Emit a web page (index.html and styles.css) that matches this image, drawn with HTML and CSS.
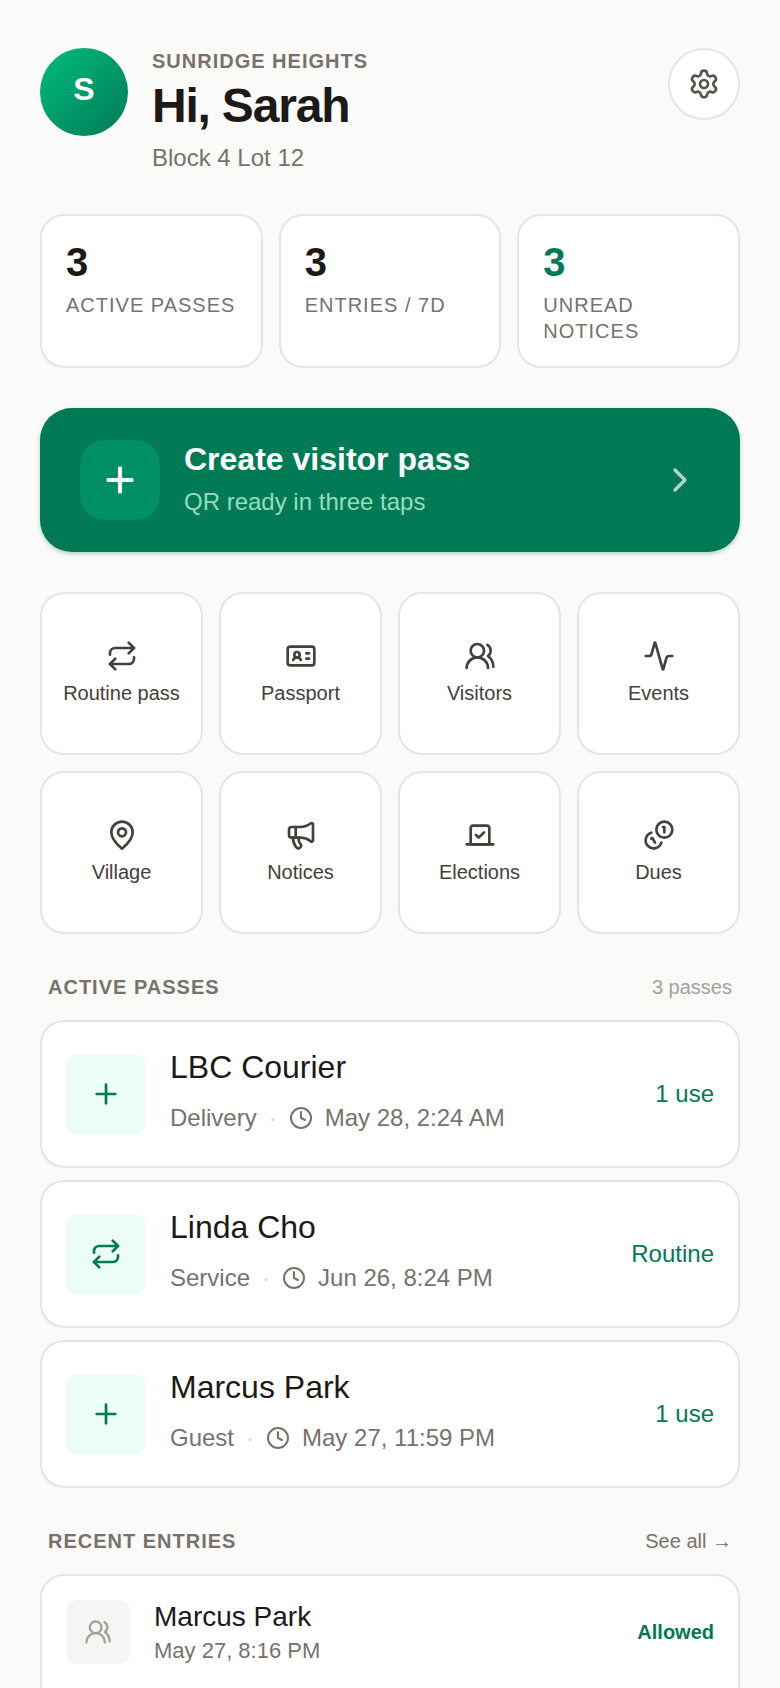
FILE: index.html
```html
<!DOCTYPE html>
<html lang="en">
<head>
<meta charset="utf-8">
<meta name="viewport" content="width=device-width, initial-scale=1">
<title>Sunridge Heights</title>
<link rel="stylesheet" href="styles.css">
</head>
<body>
<svg class="sprite" aria-hidden="true">
  <symbol id="plus" viewBox="0 0 24 24"><path d="M5 12h14M12 5v14"/></symbol>
  <symbol id="repeat" viewBox="0 0 24 24"><path d="m17 2 4 4-4 4"/><path d="M3 11v-1a4 4 0 0 1 4-4h14"/><path d="m7 22-4-4 4-4"/><path d="M21 13v1a4 4 0 0 1-4 4H3"/></symbol>
  <symbol id="users" viewBox="0 0 24 24"><path d="M18 21a8 8 0 0 0-16 0"/><circle cx="10" cy="8" r="5"/><path d="M22 20c0-3.37-2-6.5-4-8a5 5 0 0 0-.45-8.3"/></symbol>
  <symbol id="clock" viewBox="0 0 24 24"><circle cx="12" cy="12" r="10"/><path d="M12 6v6l4 2"/></symbol>
</svg>
<main class="app">
  <header class="header">
    <div class="avatar">S</div>
    <div class="identity">
      <p class="community">SUNRIDGE HEIGHTS</p>
      <h1 class="greeting">Hi, Sarah</h1>
      <p class="address">Block 4 Lot 12</p>
    </div>
    <button class="settings" type="button" aria-label="Settings">
      <svg class="icon" viewBox="0 0 24 24"><path d="M9.671 4.136a2.34 2.34 0 0 1 4.659 0 2.34 2.34 0 0 0 3.319 1.915 2.34 2.34 0 0 1 2.33 4.033 2.34 2.34 0 0 0 0 3.831 2.34 2.34 0 0 1-2.33 4.033 2.34 2.34 0 0 0-3.319 1.915 2.34 2.34 0 0 1-4.659 0 2.34 2.34 0 0 0-3.32-1.915 2.34 2.34 0 0 1-2.33-4.033 2.34 2.34 0 0 0 0-3.831A2.34 2.34 0 0 1 6.35 6.051a2.34 2.34 0 0 0 3.319-1.915"/><circle cx="12" cy="12" r="3"/></svg>
    </button>
  </header>

  <section class="stats" aria-label="Summary">
    <div class="card stat"><p class="stat-value">3</p><p class="stat-label">ACTIVE PASSES</p></div>
    <div class="card stat"><p class="stat-value">3</p><p class="stat-label">ENTRIES / 7D</p></div>
    <div class="card stat"><p class="stat-value stat-value-accent">3</p><p class="stat-label">UNREAD NOTICES</p></div>
  </section>

  <a class="create" href="#create">
    <span class="create-icon"><svg class="icon icon-large icon-heavy"><use href="#plus"/></svg></span>
    <span class="create-text">
      <span class="create-title">Create visitor pass</span>
      <span class="create-sub">QR ready in three taps</span>
    </span>
    <svg class="icon icon-large create-chevron" viewBox="0 0 24 24"><path d="m9 18 6-6-6-6"/></svg>
  </a>

  <nav class="tiles" aria-label="Shortcuts">
    <a class="card tile" href="#routine"><svg class="icon"><use href="#repeat"/></svg>Routine pass</a>
    <a class="card tile" href="#passport"><svg class="icon" viewBox="0 0 24 24"><rect x="2" y="5" width="20" height="14" rx="2"/><circle cx="9" cy="11" r="2"/><path d="M16 10h2M16 14h2M6.17 15a3 3 0 0 1 5.66 0"/></svg>Passport</a>
    <a class="card tile" href="#visitors"><svg class="icon"><use href="#users"/></svg>Visitors</a>
    <a class="card tile" href="#events"><svg class="icon" viewBox="0 0 24 24"><path d="M22 12h-2.48a2 2 0 0 0-1.93 1.46l-2.35 8.36a.25.25 0 0 1-.48 0L9.24 2.18a.25.25 0 0 0-.48 0l-2.35 8.36A2 2 0 0 1 4.49 12H2"/></svg>Events</a>
    <a class="card tile" href="#village"><svg class="icon" viewBox="0 0 24 24"><path d="M20 10c0 4.993-5.539 10.193-7.399 11.799a1 1 0 0 1-1.202 0C9.539 20.193 4 14.993 4 10a8 8 0 0 1 16 0"/><circle cx="12" cy="10" r="3"/></svg>Village</a>
    <a class="card tile" href="#notices"><svg class="icon" viewBox="0 0 24 24"><path d="M11 6a13 13 0 0 0 8.4-2.8A1 1 0 0 1 21 4v12a1 1 0 0 1-1.6.8A13 13 0 0 0 11 14H5a2 2 0 0 1-2-2V8a2 2 0 0 1 2-2z"/><path d="M6 14a12 12 0 0 0 2.4 7.2 2 2 0 0 0 3.2-2.4A8 8 0 0 1 10 14"/><path d="M8 6v8"/></svg>Notices</a>
    <a class="card tile" href="#elections"><svg class="icon" viewBox="0 0 24 24"><path d="m9 12 2 2 4-4"/><path d="M5 7c0-1.1.9-2 2-2h10a2 2 0 0 1 2 2v12H5V7Z"/><path d="M22 19H2"/></svg>Elections</a>
    <a class="card tile" href="#dues"><svg class="icon" viewBox="0 0 24 24"><path d="M13.744 17.736a6 6 0 1 1-7.48-7.48"/><path d="M15 6h1v4"/><path d="m6.134 14.768.866-.5 2 3.464"/><circle cx="16" cy="8" r="6"/></svg>Dues</a>
  </nav>

  <section class="section">
    <div class="section-head">
      <h2 class="section-title">ACTIVE PASSES</h2>
      <span class="section-count">3 passes</span>
    </div>
    <div class="passes">
      <a class="card pass" href="#lbc">
        <span class="pass-icon"><svg class="icon"><use href="#plus"/></svg></span>
        <span class="pass-text">
          <span class="pass-name">LBC Courier</span>
          <span class="pass-meta"><span>Delivery</span><span class="dot">·</span><svg class="icon icon-small"><use href="#clock"/></svg><span>May 28, 2:24 AM</span></span>
        </span>
        <span class="pass-kind">1 use</span>
      </a>
      <a class="card pass" href="#linda">
        <span class="pass-icon"><svg class="icon"><use href="#repeat"/></svg></span>
        <span class="pass-text">
          <span class="pass-name">Linda Cho</span>
          <span class="pass-meta"><span>Service</span><span class="dot">·</span><svg class="icon icon-small"><use href="#clock"/></svg><span>Jun 26, 8:24 PM</span></span>
        </span>
        <span class="pass-kind">Routine</span>
      </a>
      <a class="card pass" href="#marcus">
        <span class="pass-icon"><svg class="icon"><use href="#plus"/></svg></span>
        <span class="pass-text">
          <span class="pass-name">Marcus Park</span>
          <span class="pass-meta"><span>Guest</span><span class="dot">·</span><svg class="icon icon-small"><use href="#clock"/></svg><span>May 27, 11:59 PM</span></span>
        </span>
        <span class="pass-kind">1 use</span>
      </a>
    </div>
  </section>

  <section class="section">
    <div class="section-head">
      <h2 class="section-title">RECENT ENTRIES</h2>
      <a class="section-link" href="#entries">See all →</a>
    </div>
    <div class="card entries">
      <div class="entry">
        <span class="entry-icon"><svg class="icon icon-medium"><use href="#users"/></svg></span>
        <div class="entry-text">
          <p class="entry-name">Marcus Park</p>
          <p class="entry-time">May 27, 8:16 PM</p>
        </div>
        <span class="entry-status">Allowed</span>
      </div>
    </div>
  </section>
</main>
</body>
</html>
```
FILE: styles.css
```css
:root {
  --page: #fafaf9;
  --line: #e5e5e3;
  --ink: #1c1917;
  --ink-soft: #44403b;
  --muted: #79716b;
  --faint: #a6a09b;
  --green: #007a55;
}

* { box-sizing: border-box; }

body {
  margin: 0;
  background: var(--page);
  color: var(--ink);
  font-family: "Liberation Sans", Arial, sans-serif;
  font-size: 20px;
  line-height: 26px;
}

h1, h2, p { margin: 0; }
a { color: inherit; text-decoration: none; }

.sprite { display: none; }

.app { padding: 48px 40px; }

.card {
  background: #fff;
  border: 2px solid var(--line);
  border-radius: 24px;
}

.icon {
  flex: none;
  width: 32px;
  height: 32px;
  fill: none;
  stroke: currentColor;
  stroke-width: 2;
  stroke-linecap: round;
  stroke-linejoin: round;
}
.icon-small { width: 24px; height: 24px; }
.icon-medium { width: 28px; height: 28px; }
.icon-large { width: 40px; height: 40px; }
.icon-heavy { stroke-width: 2.5; }

/* Header */
.header {
  display: flex;
  align-items: flex-start;
  gap: 24px;
}
.avatar {
  display: flex;
  flex: none;
  align-items: center;
  justify-content: center;
  width: 88px;
  height: 88px;
  padding-bottom: 6px;
  border-radius: 50%;
  background: linear-gradient(135deg, #00bc7d, #007a55);
  color: #fff;
  font-size: 32px;
  font-weight: 700;
}
.identity { flex: 1; }
.community {
  color: var(--muted);
  font-weight: 700;
  letter-spacing: 1px;
}
.greeting {
  margin: 4px 0;
  font-size: 48px;
  line-height: 56px;
  letter-spacing: -0.025em;
}
.address {
  color: var(--muted);
  font-size: 24px;
  line-height: 40px;
}
.settings {
  display: flex;
  flex: none;
  align-items: center;
  justify-content: center;
  width: 72px;
  height: 72px;
  padding: 0;
  border: 2px solid var(--line);
  border-radius: 50%;
  background: #fff;
  color: #57534d;
}

/* Summary */
.stats {
  display: grid;
  grid-template-columns: repeat(3, 1fr);
  gap: 16px;
  margin-top: 36px;
}
.stat { padding: 20px 24px 22px; }
.stat-value {
  margin-bottom: 4px;
  font-size: 40px;
  font-weight: 700;
  line-height: 52px;
}
.stat-value-accent { color: var(--green); }
.stat-label {
  color: var(--muted);
  letter-spacing: 1px;
}

/* Create pass */
.create {
  display: flex;
  align-items: center;
  gap: 24px;
  margin-top: 40px;
  padding: 32px 40px;
  border-radius: 32px;
  background: var(--green);
  box-shadow: 0 2px 4px rgba(0, 122, 85, 0.3);
  color: #fff;
}
.create-icon {
  display: flex;
  align-items: center;
  justify-content: center;
  width: 80px;
  height: 80px;
  border-radius: 24px;
  background: #008f62;
}
.create-text {
  display: flex;
  flex: 1;
  flex-direction: column;
  gap: 6px;
}
.create-title {
  font-size: 32px;
  font-weight: 700;
  line-height: 38px;
}
.create-sub {
  color: #98dabe;
  font-size: 24px;
  line-height: 36px;
}
.create-chevron { color: #b2d7cc; }

/* Shortcuts */
.tiles {
  display: grid;
  grid-template-columns: repeat(4, 1fr);
  gap: 16px;
  margin-top: 40px;
}
.tile {
  display: flex;
  flex-direction: column;
  align-items: center;
  justify-content: center;
  gap: 8px;
  aspect-ratio: 1;
  padding-bottom: 2px;
  color: var(--ink-soft);
}

/* Sections */
.section { margin-top: 40px; }
.section-head {
  display: flex;
  justify-content: space-between;
  margin-bottom: 20px;
  padding: 0 8px;
}
.section-title {
  color: var(--muted);
  font-size: 20px;
  letter-spacing: 1px;
}
.section-count { color: var(--faint); }
.section-link { color: var(--muted); }

.passes {
  display: flex;
  flex-direction: column;
  gap: 12px;
}
.pass {
  display: flex;
  align-items: center;
  gap: 24px;
  padding: 24px;
}
.pass-icon {
  display: flex;
  flex: none;
  align-items: center;
  justify-content: center;
  width: 80px;
  height: 80px;
  border-radius: 12px;
  background: #ecfdf5;
  color: var(--green);
}
.pass-text {
  display: flex;
  flex: 1;
  flex-direction: column;
  gap: 6px;
}
.pass-name {
  font-size: 32px;
  line-height: 42px;
}
.pass-meta {
  display: flex;
  align-items: center;
  gap: 12px;
  color: var(--muted);
  font-size: 24px;
  line-height: 48px;
}
.dot { color: #d6d3d1; }
.pass-kind {
  color: var(--green);
  font-size: 24px;
}

.entries { padding-bottom: 24px; }
.entry {
  display: flex;
  align-items: center;
  gap: 24px;
  padding: 22px 24px;
}
.entry-icon {
  display: flex;
  flex: none;
  align-items: center;
  justify-content: center;
  width: 64px;
  height: 64px;
  border-radius: 12px;
  background: #f5f5f4;
  color: var(--faint);
}
.entry-text { flex: 1; }
.entry-name {
  font-size: 28px;
  line-height: 38px;
}
.entry-time {
  color: var(--muted);
  font-size: 22px;
  line-height: 30px;
}
.entry-status {
  color: var(--green);
  font-weight: 700;
}
```
